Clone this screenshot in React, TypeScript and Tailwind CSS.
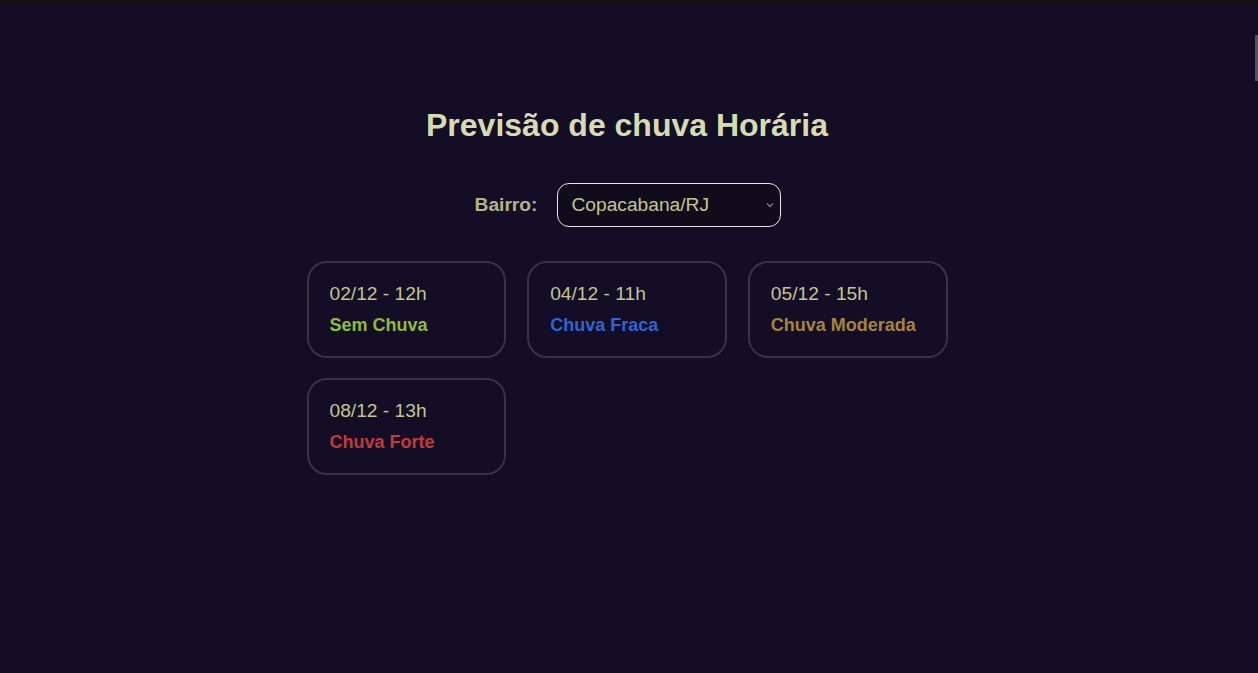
import React from "react";

const previsoes = [
  { data: "02/12 - 12h", status: "Sem Chuva", cor: "text-[#8fbf2f]" },
  { data: "04/12 - 11h", status: "Chuva Fraca", cor: "text-[#2f63d6]" },
  { data: "05/12 - 15h", status: "Chuva Moderada", cor: "text-[#a8843a]" },
  { data: "08/12 - 13h", status: "Chuva Forte", cor: "text-[#c23a3a]" },
];

const App = () => {
  return (
    <div className="min-h-[673px] bg-[#130d25] font-['Liberation_Sans',Arial,sans-serif] relative">
      <div className="h-[5px] bg-[#121117]" />
      <div className="absolute right-0 top-[35px] h-[46px] w-[3px] bg-[#55525c]" />
      <div className="flex flex-col items-center pr-[4px]">
        <h1 className="mt-[100px] text-[32px] font-bold text-[#d6dcb0] leading-[40px]">
          Previsão de chuva Horária
        </h1>

        <div className="mt-[38px] flex items-center gap-[20px] pl-[2px]">
          <label className="text-[19.2px] font-bold text-[#b3b485]">Bairro:</label>
          <div className="relative">
            <select
              defaultValue="copacabana"
              className="h-[44px] w-[224px] appearance-none rounded-[12px] border-[1.5px] border-[#e8e6ea] bg-[#110c1b] pl-[13px] text-[19.2px] text-[#c3c592] outline-none"
            >
              <option value="copacabana">Copacabana/RJ</option>
            </select>
            <svg
              className="pointer-events-none absolute right-[6px] top-[18px]"
              width="10"
              height="8"
              viewBox="0 0 10 8"
              fill="none"
            >
              <path d="M2 2.5 L5 5.5 L8 2.5" stroke="#7d7a86" strokeWidth="1.4" />
            </svg>
          </div>
        </div>

        <div className="mt-[34px] grid w-[641px] grid-cols-3 gap-x-[21px] gap-y-[20px]">
          {previsoes.map((p) => (
            <div
              key={p.data}
              className="h-[97px] rounded-[20px] border-2 border-[#38333f] pl-[21px] pt-[20px]"
            >
              <p className="text-[19.2px] leading-[22px] text-[#c3c592]">{p.data}</p>
              <p className={`mt-[10px] text-[18px] font-bold leading-[20px] ${p.cor}`}>
                {p.status}
              </p>
            </div>
          ))}
        </div>
      </div>
    </div>
  );
};

export default App;
